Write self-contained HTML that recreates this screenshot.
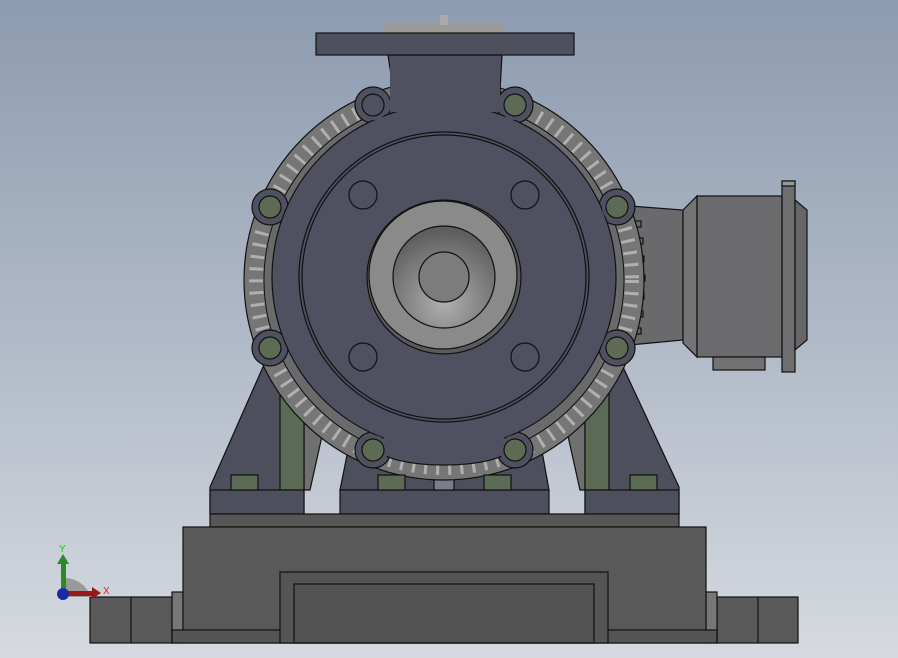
<!DOCTYPE html><html><head><style>html,body{margin:0;padding:0;width:898px;height:658px;overflow:hidden}</style></head><body>
<svg width="898" height="658" viewBox="0 0 898 658" xmlns="http://www.w3.org/2000/svg" font-family="Liberation Sans, sans-serif">
<defs>
<linearGradient id="bg" x1="0" y1="0" x2="0" y2="1"><stop offset="0" stop-color="#8d9bb0"/><stop offset="0.55" stop-color="#b3bcc9"/><stop offset="1" stop-color="#d6dae0"/></linearGradient>
<radialGradient id="cone" cx="0.5" cy="0.75" r="0.7"><stop offset="0" stop-color="#b0b0b0"/><stop offset="1" stop-color="#5e5e60"/></radialGradient>
</defs>
<rect width="898" height="658" fill="url(#bg)"/>
<g stroke="#111" stroke-width="1.2">
<!-- terminal box -->
<path d="M630 206 L683 210 L683 340 L630 345 Z" fill="#6a6a6c"/>
<path d="M683 210 L697 196 L697 357 L683 343 Z" fill="#747476"/>
<rect x="697" y="196" width="85" height="161" fill="#6b6b6d"/>
<rect x="713" y="357" width="52" height="13" fill="#727274"/>
<rect x="782" y="181" width="13" height="191" fill="#6e6e70"/>
<rect x="782" y="181" width="13" height="5" fill="#999"/>
<path d="M795 200 L807 210 L807 340 L795 350 Z" fill="#666668"/>
<g fill="#6a6a6c"><rect x="627" y="221" width="14" height="6"/><rect x="627" y="238" width="16" height="6"/><rect x="630" y="256" width="14" height="6"/><rect x="630" y="275" width="15" height="6"/><rect x="630" y="293" width="14" height="6"/><rect x="627" y="311" width="16" height="6"/><rect x="627" y="328" width="14" height="6"/></g>
<!-- legs -->
<path d="M263 367 L210 487 L210 514 L304 514 L304 367 Z" fill="#4d4f5c"/>
<path d="M623 367 L679 487 L679 514 L585 514 L585 367 Z" fill="#4d4f5c"/>
<path d="M304 420 L330 400 L310 490 L304 490Z" fill="#6f7070"/>
<path d="M585 420 L560 400 L580 490 L585 490Z" fill="#6f7070"/>
<rect x="280" y="372" width="24" height="118" fill="#5c6b55"/>
<rect x="585" y="372" width="24" height="118" fill="#5c6b55"/>
<rect x="210" y="490" width="94" height="24" fill="#4d4f5c"/>
<rect x="585" y="490" width="94" height="24" fill="#4d4f5c"/>
<path d="M350 440 L540 440 L549 490 L340 490 Z" fill="#4d4f5c"/>
<rect x="340" y="490" width="209" height="24" fill="#4d4f5c"/>
<rect x="434" y="455" width="20" height="35" fill="#7b7d88"/>
<!-- fins ring -->
<circle cx="444" cy="280" r="200" fill="#767676"/>
</g>
<circle cx="444" cy="280" r="188" fill="none" stroke="#b0b0b0" stroke-width="14" stroke-dasharray="3 9"/>
<circle cx="444" cy="280" r="180" fill="#6a6a6c" stroke="#111" stroke-width="1"/>
<g stroke="#111" stroke-width="1.2">
<!-- top flange -->
<rect x="384" y="24" width="120" height="10" fill="#9a9a96" stroke="none"/>
<rect x="440" y="15" width="8" height="10" fill="#aaa" stroke="none"/>
<path d="M388 55 L394 95 L380 120 L510 120 L500 90 L502 55 Z" fill="#4f5160"/>
<rect x="316" y="33" width="258" height="22" fill="#4e505e"/>
<!-- casing -->
<g fill="#4f5160">
<circle cx="373" cy="105" r="18"/><circle cx="515" cy="105" r="18"/><circle cx="270" cy="207" r="18"/><circle cx="617" cy="207" r="18"/><circle cx="270" cy="348" r="18"/><circle cx="617" cy="348" r="18"/><circle cx="373" cy="450" r="18"/><circle cx="515" cy="450" r="18"/>
<ellipse cx="444" cy="445" rx="70" ry="20"/>
</g>
<circle cx="444" cy="277" r="172" fill="#4f5160"/>
</g>
<g fill="#4f5160" stroke="none">
<path d="M390 56 L500 56 L500 112 L390 112Z"/>
<circle cx="373" cy="105" r="15"/><circle cx="515" cy="105" r="15"/><circle cx="270" cy="207" r="15"/><circle cx="617" cy="207" r="15"/><circle cx="270" cy="348" r="15"/><circle cx="617" cy="348" r="15"/><circle cx="373" cy="450" r="15"/><circle cx="515" cy="450" r="15"/>
<ellipse cx="444" cy="445" rx="66" ry="17"/>
</g>
<g stroke="#111" stroke-width="1.2">
<circle cx="444" cy="277" r="145" fill="none"/>
<circle cx="444" cy="277" r="142" fill="none"/>
<g fill="none"><circle cx="363" cy="195" r="14"/><circle cx="525" cy="195" r="14"/><circle cx="363" cy="357" r="14"/><circle cx="525" cy="357" r="14"/></g>
<g fill="#5d6b55"><circle cx="373" cy="105" r="11" fill="#4f5160"/><circle cx="515" cy="105" r="11"/><circle cx="270" cy="207" r="11"/><circle cx="617" cy="207" r="11"/><circle cx="270" cy="348" r="11"/><circle cx="617" cy="348" r="11"/><circle cx="373" cy="450" r="11"/><circle cx="515" cy="450" r="11"/></g>
<!-- eye -->
<circle cx="444" cy="277" r="77" fill="#5a5a5c"/>
<circle cx="443" cy="275" r="74" fill="#8a8a8a"/>
<circle cx="444" cy="277" r="51" fill="url(#cone)"/>
<circle cx="444" cy="277" r="25" fill="#7c7c7c"/>
<!-- bolts -->
<g fill="#5c6b55"><rect x="231" y="475" width="27" height="15"/><rect x="378" y="475" width="27" height="15"/><rect x="484" y="475" width="27" height="15"/><rect x="630" y="475" width="27" height="15"/></g>
<!-- base -->
<rect x="210" y="514" width="469" height="13" fill="#575757"/>
<rect x="90" y="597" width="82" height="46" fill="#595959"/>
<rect x="717" y="597" width="81" height="46" fill="#595959"/>
<line x1="131" y1="597" x2="131" y2="643"/><line x1="758" y1="597" x2="758" y2="643"/>
<rect x="172" y="592" width="11" height="51" fill="#777"/>
<rect x="706" y="592" width="11" height="51" fill="#777"/>
<rect x="183" y="527" width="523" height="116" fill="#595959"/>
<rect x="172" y="630" width="545" height="13" fill="#555" />
<rect x="280" y="572" width="328" height="71" fill="#555"/>
<rect x="294" y="584" width="300" height="59" fill="#525252"/>
</g>
<!-- axis triad -->
<path d="M63 597 L63 578 A28 28 0 0 1 91 597 Z" fill="#9a9a9a"/>
<rect x="61" y="562" width="5" height="32" fill="#2a8a2a"/>
<path d="M57 564 L63 554 L69 564 Z" fill="#2a8a2a"/>
<rect x="64" y="591" width="30" height="5" fill="#9a1818"/>
<path d="M92 587 L101 593 L92 599 Z" fill="#9a1818"/>
<circle cx="63" cy="594" r="6" fill="#1a2aa0"/>
<text x="59" y="552" font-size="10" fill="#2ac02a">Y</text>
<text x="103" y="594" font-size="10" fill="#e02020">X</text>
</svg>
</body></html>
